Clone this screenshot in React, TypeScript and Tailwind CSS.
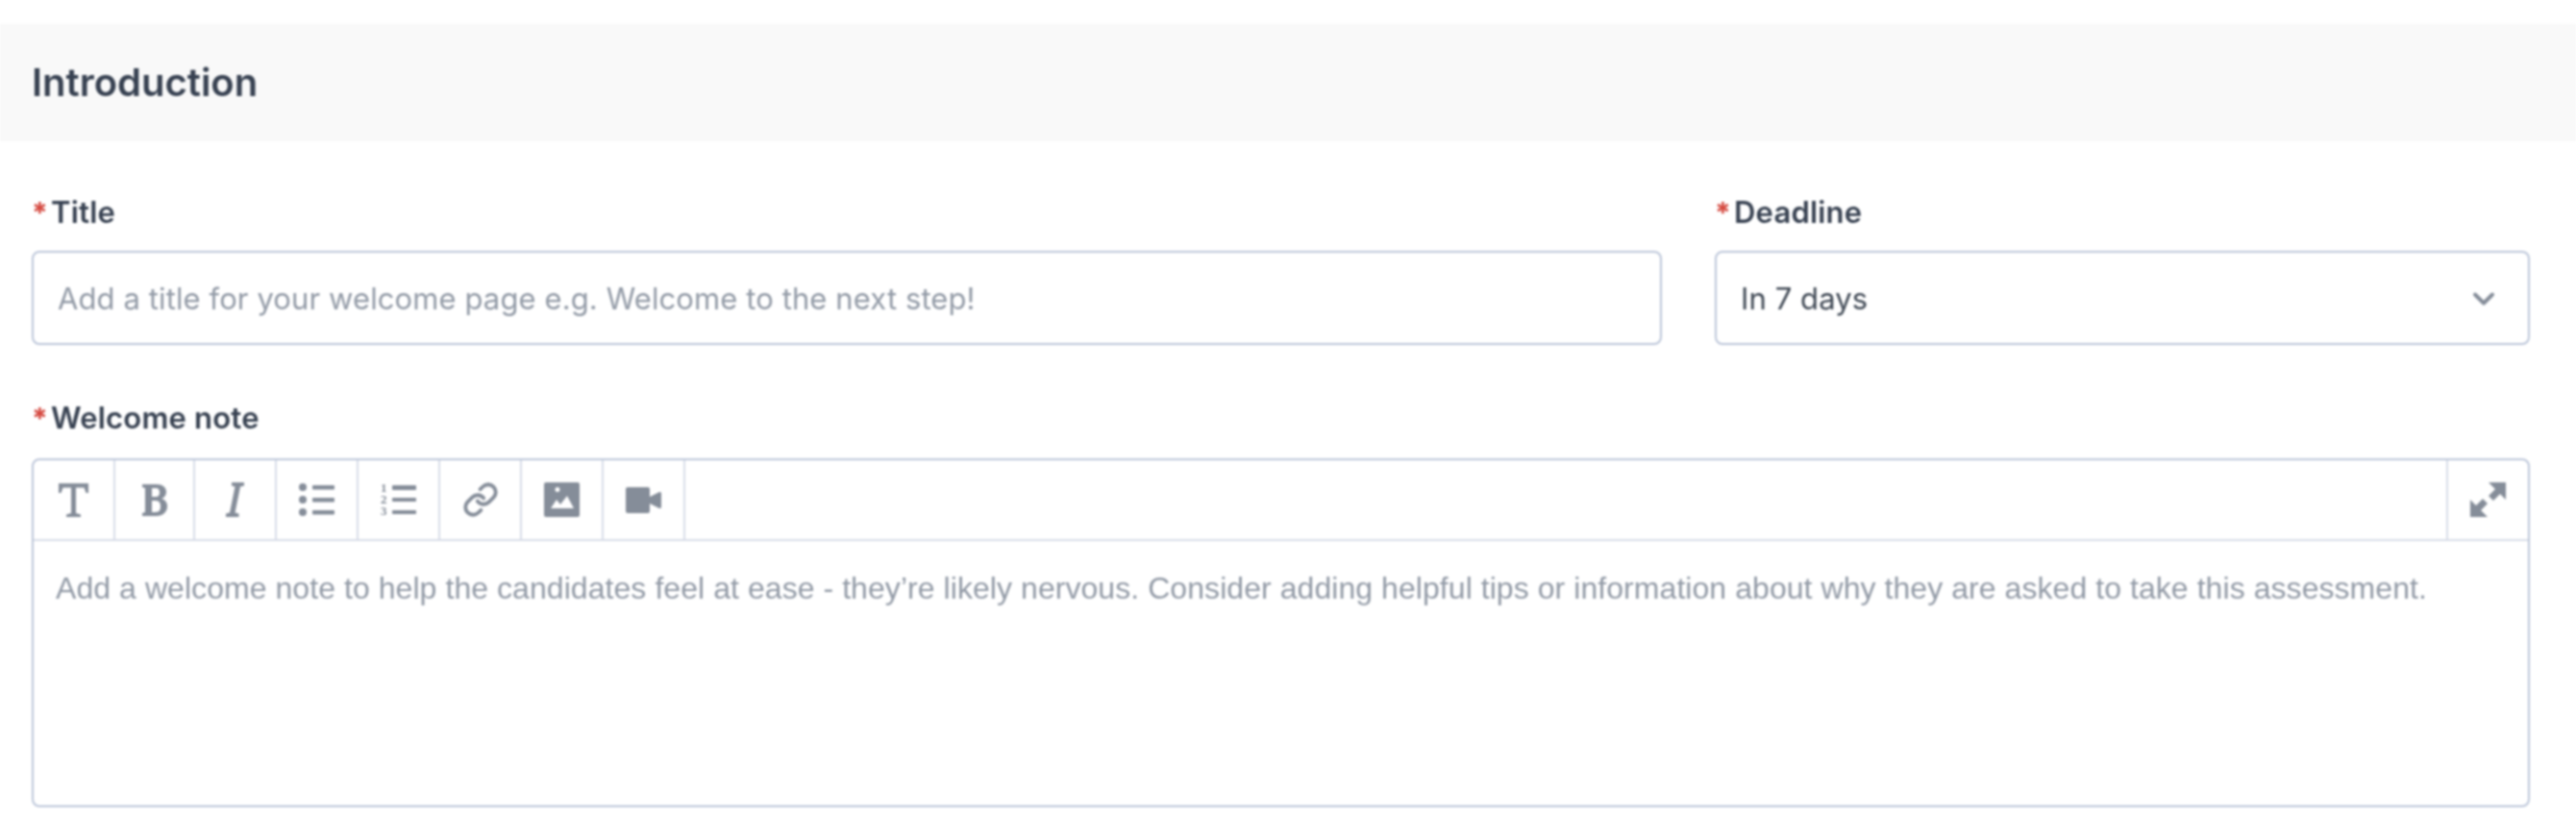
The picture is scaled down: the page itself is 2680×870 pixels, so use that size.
import { ChevronDown, Link } from "lucide-react";
import type { ReactNode } from "react";

const iconColor = "#858d99";

function Label({ children }: { children: ReactNode }) {
  return (
    <label className="flex h-[40px] items-center pb-[1px] text-[31px] font-semibold leading-[38px] tracking-[0.2px] text-[#374151]">
      <span className="mr-[3px] text-[30px] font-bold text-[#d5483f]">*</span>
      {children}
    </label>
  );
}

function ToolCell({ width, children }: { width: string; children: ReactNode }) {
  return <div className={`flex h-full items-center justify-center border-r-2 border-[#d8dde8] ${width}`}>{children}</div>;
}

function TextIcon() {
  return (
    <svg width="33" height="36" viewBox="0 0 33 36" fill={iconColor}>
      <path d="M1 1h31v10h-2.500l-2-5.500H19v26.500l5 1.500V36H9v-2.500l5-1.500V5.500H5.500l-2 5.500H1z" />
    </svg>
  );
}

function BoldIcon() {
  return (
    <svg width="26" height="33" viewBox="0 0 26 33" fill={iconColor} fillRule="evenodd">
      <path d="M0 0h15c6 0 10 3 10 8 0 3-2 6-5 7 4 1 6 4 6 8 0 6-5 10-11 10H0v-3l3-1V4L0 3zM10 4v9h4c3 0 4-2 4-4.500S17 4 14 4zM10 17v12h4c4 0 5-3 5-6s-1-6-5-6z" />
    </svg>
  );
}

function ItalicIcon() {
  return (
    <svg width="19" height="36" viewBox="0 0 19 36" fill={iconColor}>
      <path d="M6 0h13v3.500l-4 1-5.500 27 4 1V36H0v-3.500l4-1 5.500-27-3.500-1z" />
    </svg>
  );
}

function BulletIcon() {
  return (
    <svg width="37" height="34" viewBox="0 0 37 34" fill={iconColor}>
      <circle cx="4" cy="4" r="4" />
      <circle cx="4" cy="17" r="4" />
      <circle cx="4" cy="30" r="4" />
      <rect x="14" y="2" width="23" height="4.500" rx="1" />
      <rect x="14" y="15" width="23" height="4.500" rx="1" />
      <rect x="14" y="28" width="23" height="4.500" rx="1" />
    </svg>
  );
}

function NumberIcon() {
  return (
    <div className="flex h-[36px] w-[37px] items-stretch gap-[5px]">
      <div className="flex w-[7px] flex-col justify-between font-['Liberation_Serif',serif] text-[13px] font-bold leading-[12px] text-[#858d99]">
        <span>1</span>
        <span>2</span>
        <span>3</span>
      </div>
      <div className="flex flex-1 flex-col justify-between py-[3px]">
        <div className="h-[4.5px] rounded-[1px] bg-[#858d99]" />
        <div className="h-[4.5px] rounded-[1px] bg-[#858d99]" />
        <div className="h-[4.5px] rounded-[1px] bg-[#858d99]" />
      </div>
    </div>
  );
}

function ImageIcon() {
  return (
    <svg width="37" height="36" viewBox="0 0 37 36" fill={iconColor}>
      <path
        fillRule="evenodd"
        d="M2 0h33a2 2 0 0 1 2 2v32a2 2 0 0 1-2 2H2a2 2 0 0 1-2-2V2a2 2 0 0 1 2-2zM7 27l6-9 4 5 7-9 7 13zM14 10a2.500 2.500 0 1 0-.1 0z"
      />
    </svg>
  );
}

function VideoIcon() {
  return (
    <svg width="37" height="27" viewBox="0 0 37 27" fill={iconColor}>
      <rect x="0" y="0" width="25" height="27" rx="2" />
      <path d="M25 10l10-5a1.500 1.500 0 0 1 2 1.500v14a1.500 1.500 0 0 1-2 1.500l-10-5z" />
    </svg>
  );
}

function ExpandIcon() {
  return (
    <svg width="37" height="36" viewBox="0 0 37 36" fill={iconColor}>
      <path d="M19 0h18v18l-6-6-7 7-5-5 7-7z" />
      <path d="M18 36H0V18l6 6 7-7 5 5-7 7z" />
    </svg>
  );
}

export default function App() {
  return (
    <div className="h-[870px] w-[2680px] bg-white pt-[25px] font-['Inter',sans-serif] blur-[0.8px]">
      <div className="flex h-[122px] items-center bg-[#f9f9f9] pl-[33px]">
        <h2 className="text-[40px] font-semibold text-[#374151]">Introduction</h2>
      </div>

      <div className="pl-[33px] pr-[48px] pt-[54px]">
        <div className="flex gap-[55px]">
          <div className="w-[1696px]">
            <Label>Title</Label>
            <div className="mt-[20px] flex h-[98px] w-full items-center rounded-lg border-2 border-[#bcc6d9] bg-white px-[25px] pt-[2px] text-[31px] tracking-[0.1px] text-[#929aa6]">
              Add a title for your welcome page e.g. Welcome to the next step!
            </div>
          </div>
          <div className="w-[848px]">
            <Label>Deadline</Label>
            <div className="mt-[20px] flex h-[98px] items-center justify-between rounded-lg border-2 border-[#bcc6d9] bg-white pl-[25px] pr-[28px] pt-[2px] text-[31px] tracking-[0.1px] text-[#3f4854]">
              <span>In 7 days</span>
              <ChevronDown size={36} strokeWidth={2.6} color={iconColor} />
            </div>
          </div>
        </div>

        <div className="mt-[56px]">
          <Label>Welcome note</Label>
          <div className="mt-[22px] h-[363px] rounded-lg border-2 border-[#bcc6d9]">
            <div className="flex h-[84px] items-center justify-between border-b-2 border-[#d8dde8]">
              <div className="flex h-full">
                <ToolCell width="w-[85px]"><TextIcon /></ToolCell>
                <ToolCell width="w-[83px]"><BoldIcon /></ToolCell>
                <ToolCell width="w-[85px]"><ItalicIcon /></ToolCell>
                <ToolCell width="w-[85px]"><BulletIcon /></ToolCell>
                <ToolCell width="w-[85px]"><NumberIcon /></ToolCell>
                <ToolCell width="w-[85px]"><Link size={38} strokeWidth={2.4} color={iconColor} /></ToolCell>
                <ToolCell width="w-[85px]"><ImageIcon /></ToolCell>
                <ToolCell width="w-[85px]"><VideoIcon /></ToolCell>
              </div>
              <div className="flex h-full w-[85px] items-center justify-center border-l-2 border-[#d8dde8]">
                <ExpandIcon />
              </div>
            </div>
            <p className="px-[23px] pt-[29px] font-['Liberation_Sans',sans-serif] text-[32px] leading-[40px] tracking-[0.06px] text-[#929aa6]">
              Add a welcome note to help the candidates feel at ease - they’re likely nervous. Consider adding helpful tips or information about why they are asked to take this assessment.
            </p>
          </div>
        </div>
      </div>
    </div>
  );
}
